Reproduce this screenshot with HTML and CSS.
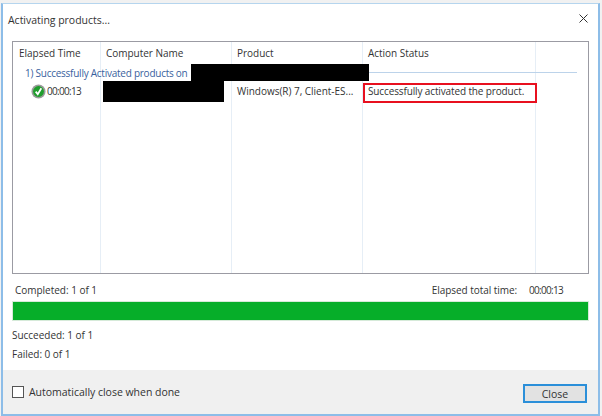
FILE: index.html
```html
<!DOCTYPE html>
<html lang="en">
<head>
<meta charset="utf-8">
<title>Activating products...</title>
<link rel="stylesheet" href="styles.css">
</head>
<body>
<div class="dialog">
  <div class="titlebar">
    <span class="title">Activating products...</span>
    <svg class="close-x" width="9" height="9" viewBox="0 0 9 9"><path d="M.5.5l8 8M8.5.5l-8 8" stroke="#333" stroke-width="1" fill="none"/></svg>
  </div>
  <div class="content">
    <div class="list">
      <div class="cols">
        <div class="col c1"></div><div class="col c2"></div><div class="col c3"></div><div class="col c4"></div>
      </div>
      <div class="head">
        <span class="h1">Elapsed Time</span><span class="h2">Computer Name</span><span class="h3">Product</span><span class="h4">Action Status</span>
      </div>
      <div class="group">
        <span class="group-text">1) Successfully Activated products on</span>
        <span class="group-rule"></span>
      </div>
      <div class="row">
        <span class="r1">
          <svg class="ok" width="15" height="15" viewBox="0 0 16 16"><circle cx="8" cy="8" r="7.5" fill="#9a9a9a"/><circle cx="8" cy="8" r="5.8" fill="#1f9e2c"/><path d="M5 8.2l2.2 2.6L11 4.6" stroke="#fff" stroke-width="1.9" fill="none"/></svg>
          <span class="time">00:00:13</span>
        </span>
        <span class="r2"></span>
        <span class="r3">Windows(R) 7, Client-ES...</span>
        <span class="status">Successfully activated the product.</span>
      </div>
      <div class="redact redact-a"></div>
      <div class="redact redact-b"></div>
    </div>
    <div class="progress-labels">
      <span>Completed: 1 of 1</span>
      <span class="elapsed"><span>Elapsed total time:</span><span class="time">00:00:13</span></span>
    </div>
    <div class="bar"></div>
    <div class="stat first">Succeeded: 1 of 1</div>
    <div class="stat">Failed: 0 of 1</div>
  </div>
  <div class="footer">
    <label class="auto"><span class="box"></span><span>Automatically close when done</span></label>
    <button class="close-btn" type="button">Close</button>
  </div>
</div>
</body>
</html>
```
FILE: styles.css
```css
html, body { margin: 0; padding: 0; }
body {
  width: 602px;
  height: 416px;
  overflow: hidden;
  background: #f1f1f1;
  font-family: "Open Sans", "Noto Sans", sans-serif;
  font-size: 10px;
  letter-spacing: -0.02px;
  color: #333;
  padding: 3px 0 0 1px;
  box-sizing: border-box;
}
.dialog {
  width: 599px;
  height: 413px;
  box-sizing: border-box;
  border: 2px solid #8dbde8;
  border-top: 1px solid #b5d5ee;
  background: #fff;
  display: flex;
  flex-direction: column;
}
.titlebar {
  height: 37px;
  flex: none;
  display: flex;
  align-items: center;
  justify-content: space-between;
  padding: 0 10px 9px 5px;
  box-sizing: border-box;
}
.title { font-size: 10.5px; color: #333; padding-top: 4px; }
.content { flex: 1; padding: 0 9px 0 9px; display: flex; flex-direction: column; }
.list {
  position: relative;
  height: 233px;
  flex: none;
  box-sizing: border-box;
  border: 1px solid #9b9ba3;
}
.cols { position: absolute; inset: 0; display: flex; }
.col { border-right: 1px solid #e6eef6; height: 100%; box-sizing: border-box; flex: none; }
.c1 { width: 88px; }
.c2 { width: 131px; }
.c3 { width: 131px; }
.c4 { width: 173px; }
.head, .row { position: relative; display: flex; }
.head { height: 21px; align-items: center; padding-top: 1px; box-sizing: border-box; }
.h1 { width: 88px; padding-left: 6px; box-sizing: border-box; }
.h2, .r2 { width: 131px; padding-left: 5px; box-sizing: border-box; }
.h3, .r3 { width: 131px; padding-left: 5px; box-sizing: border-box; white-space: nowrap; }
.h4 { padding-left: 5px; }
.group { position: relative; height: 18px; display: flex; align-items: center; padding: 1px 11px 0 12px; box-sizing: border-box; }
.group-text { color: #3a5f9e; white-space: nowrap; letter-spacing: -0.25px; }
.group-rule { flex: 1; height: 1px; background: #bcd3ea; margin: -1px 0 0 4px; }
.row { height: 22px; align-items: center; }
.r1 { width: 88px; display: flex; align-items: center; gap: 1px; padding: 0 0 2px 18px; box-sizing: border-box; }
.ok { flex: none; }
.time { letter-spacing: -0.7px; }
.r2, .r3 { padding-bottom: 2px; }
.status {
  display: block;
  width: 174px;
  height: 20px;
  line-height: 13px;
  box-sizing: border-box;
  border: 2px solid #e8101f;
  padding-left: 3px;
  margin-top: 2px;
  white-space: nowrap;
  letter-spacing: -0.13px;
}
.redact { position: absolute; background: #000; }
.redact-a { left: 178px; top: 22px; width: 178px; height: 17px; }
.redact-b { left: 90px; top: 39px; width: 121px; height: 21px; }
.progress-labels { display: flex; justify-content: space-between; padding: 0 0 0 3px; height: 16px; margin-top: 8px; box-sizing: border-box; align-items: center; flex: none; }
.elapsed { display: flex; gap: 12px; padding-right: 26px; }
.elapsed span:first-child { letter-spacing: -0.05px; }
.bar { height: 20px; background: #06ae29; border: 1px solid #d6ead9; box-sizing: border-box; margin: 3px 0 0 0; flex: none; }
.stat { height: 19px; line-height: 19px; flex: none; }
.first { margin-top: 5px; }
.footer {
  height: 44px;
  flex: none;
  background: #f0f0f0;
  display: flex;
  align-items: center;
  justify-content: space-between;
  padding: 0 11px 0 9px;
  box-sizing: border-box;
}
.auto { display: flex; align-items: center; gap: 5px; font-size: 10.5px; }
.box { width: 12px; height: 12px; border: 1px solid #555; background: #fff; box-sizing: border-box; flex: none; }
.close-btn {
  width: 64px;
  height: 19px;
  margin-top: 3px;
  border: 2px solid #2b8fd9;
  background: #e2e2e2;
  font: inherit;
  font-size: 10.5px;
  color: #333;
  padding: 0;
}
```
